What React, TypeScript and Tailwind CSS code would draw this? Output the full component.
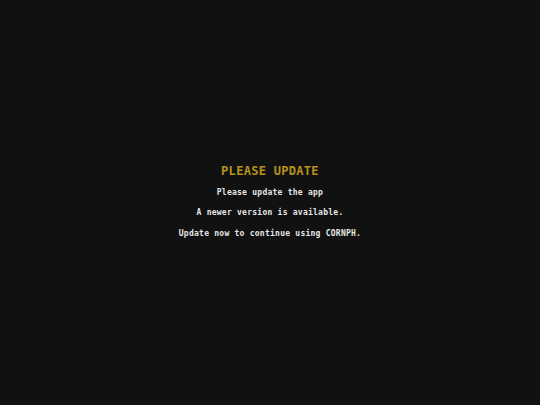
export default function App() {
  return (
    <div className="h-screen w-full bg-[#111111] flex flex-col items-center justify-center pb-[2px] font-['DejaVu_Sans_Mono',monospace]">
      <h1 className="text-[12px] leading-[14px] font-bold tracking-[0.3px] text-[#b8911c] mb-[10px]">
        PLEASE UPDATE
      </h1>
      <div className="flex flex-col items-center gap-[10px] text-[8px] leading-[10.5px] tracking-[0.25px] text-[#e6e6e6] font-bold">
        <p>Please update the app</p>
        <p>A newer version is available.</p>
        <p>Update now to continue using CORNPH.</p>
      </div>
    </div>
  )
}
